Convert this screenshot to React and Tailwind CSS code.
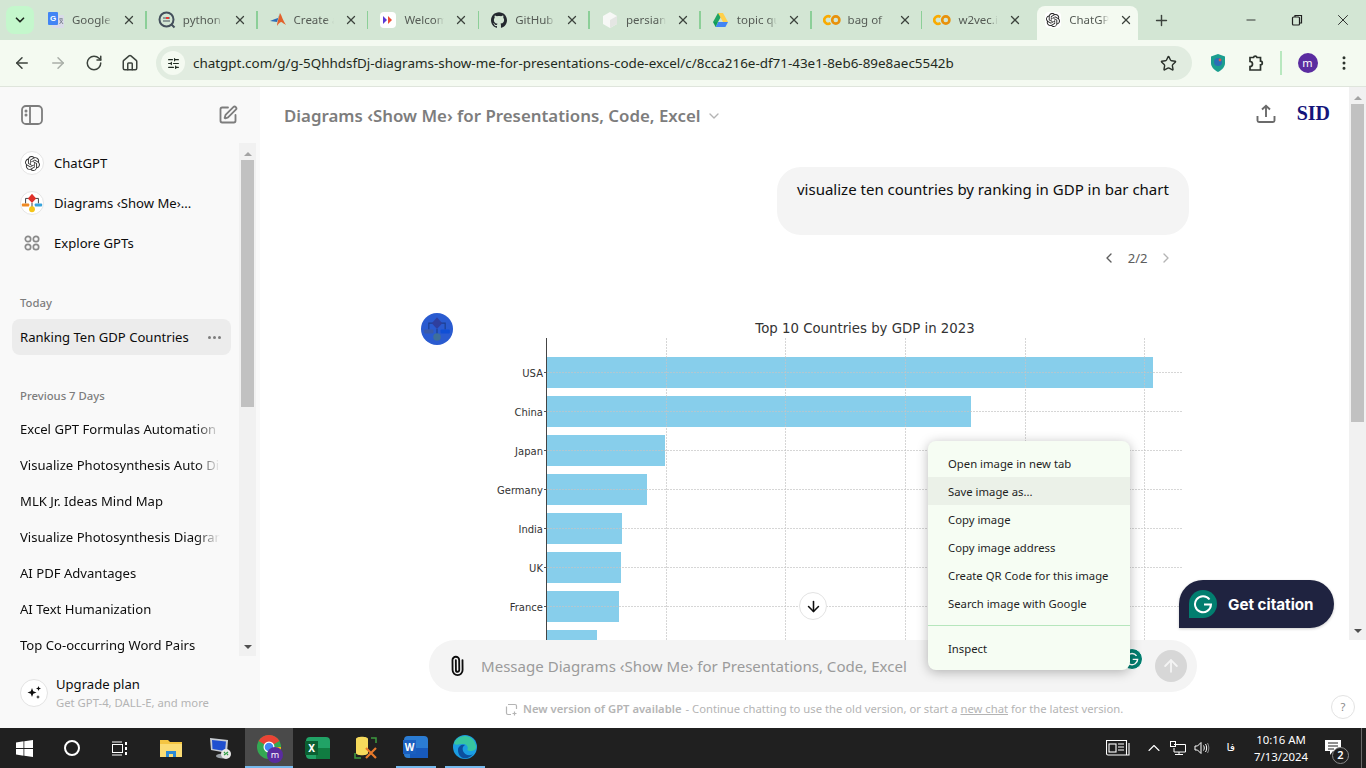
import {
  ArrowDown, ArrowLeft, ArrowRight, ArrowUp, ChevronDown, ChevronLeft, ChevronRight, ChevronUp,
  EllipsisVertical, House, Minus, Paperclip, Plus, RotateCw, SlidersHorizontal, SquarePen, Star, X,
} from 'lucide-react';
import { SiGithub, SiOpenai } from 'react-icons/si';

const GoogleTranslate = () => (
  <svg width="18" height="18" viewBox="0 0 18 18">
    <rect x="5" y="4" width="12" height="13" rx="1" fill="#d9dbe8" />
    <rect x="1" y="1" width="10" height="13" rx="1" fill="#4285f4" />
    <text x="3" y="10" fontSize="8" fontWeight="700" fill="#fff" fontFamily="Liberation Sans">G</text>
    <path d="M12 8h4M14 7v1M12.500 13l3-4M13 9l3 4" stroke="#6b7280" strokeWidth="0.8" fill="none" />
  </svg>
);
const PythonIcon = () => (
  <svg width="18" height="18" viewBox="0 0 18 18">
    <circle cx="8.500" cy="8.500" r="7" fill="none" stroke="#44505c" strokeWidth="2" />
    <path d="M13 13l3.500 3.500" stroke="#44505c" strokeWidth="2" />
    <path d="M5 7h7M5 10h7" stroke="#44505c" strokeWidth="1.200" />
    <rect x="8" y="6" width="3" height="2" fill="#e53935" />
  </svg>
);
const MatlabIcon = () => (
  <svg width="18" height="18" viewBox="0 0 18 18">
    <path d="M1 10l5-2 3-1 2-5-3 9z" fill="#2f6db5" />
    <path d="M11 2c2 3 3 8 6 12-2-1-4-3-5-3-2 1-3 2-4 4 0-3 2-9 3-13z" fill="#e2612b" />
  </svg>
);
const WelcomeIcon = () => (
  <div className="w-4 h-4 rounded-sm bg-white flex items-center justify-center">
    <svg width="10" height="10" viewBox="0 0 10 10">
      <path d="M0 1l4 4-4 4z" fill="#5b3bd6" />
      <path d="M5 1l4 4-4 4z" fill="#ee4e34" />
    </svg>
  </div>
);
const CubeIcon = () => (
  <svg width="18" height="18" viewBox="0 0 18 18">
    <path d="M9 1l7 4v8l-7 4-7-4V5z" fill="#f7f8f6" />
    <path d="M9 9l7-4v8l-7 4z" fill="#e4e6e3" />
  </svg>
);
const DriveIcon = () => (
  <svg width="17" height="16" viewBox="0 0 17 16">
    <path d="M6 1h5l-5 9H1z" fill="#1fa463" />
    <path d="M6 1h5l5 9h-5z" fill="#ffd04b" />
    <path d="M3.600 15l2.600-5H16l-2.600 5z" fill="#4285f4" />
    <path d="M1 10h5l-2.400 5z" fill="#0f9d58" />
  </svg>
);
const ColabIcon = () => (
  <svg width="18" height="12" viewBox="0 0 18 12" fill="none" strokeWidth="2.600">
    <path d="M7.500 3A3.800 3.800 0 1 0 7.500 9" stroke="#f9ab00" />
    <circle cx="12.800" cy="6" r="3.600" stroke="#e8910a" />
  </svg>
);
const ChatGptTabIcon = () => (
  <div className="w-4 h-4 rounded-sm bg-white flex items-center justify-center text-[#222]">
    <SiOpenai size={14} />
  </div>
);

const TABS = [
  { title: 'Google', icon: <GoogleTranslate />, sep: true },
  { title: 'python', icon: <PythonIcon />, sep: true },
  { title: 'Create a', icon: <MatlabIcon />, sep: true },
  { title: 'Welcom', icon: <WelcomeIcon />, sep: true },
  { title: 'GitHub', icon: <SiGithub size={16} className="text-[#24292f]" />, sep: true },
  { title: 'persian', icon: <CubeIcon />, sep: true },
  { title: 'topic qu', icon: <DriveIcon />, sep: true },
  { title: 'bag of', icon: <ColabIcon />, sep: true },
  { title: 'w2vec.i', icon: <ColabIcon />, sep: false },
  { title: 'ChatGP', icon: <ChatGptTabIcon />, sep: false, active: true },
];

function Tab({ tab }) {
  return (
    <div className="w-[110.8px] h-[34px] shrink-0 flex items-center">
      <div className={`flex-1 min-w-0 h-full flex items-center pl-[3px] pb-[6px] mx-1 ${tab.active ? 'bg-[#f4faf1] rounded-t-lg' : ''}`}>
        <div className="w-[18px] h-[18px] ml-[4px] shrink-0 flex items-center justify-center">{tab.icon}</div>
        <span className="ml-[7px] w-[40px] overflow-hidden whitespace-nowrap text-[11.5px] text-[#555b55] [mask-image:linear-gradient(to_right,black_78%,transparent)]">
          {tab.title}
        </span>
        <X size={14} strokeWidth={2.2} className="ml-[10px] shrink-0 text-[#3c433d]" />
      </div>
      <div className={`w-[1.5px] h-[18px] mb-[6px] shrink-0 ${tab.sep ? 'bg-[#8ccf98]' : ''}`} />
    </div>
  );
}

function TabStrip() {
  return (
    <div className="h-10 shrink-0 bg-[#d3e6d4] flex">
      <div className="w-[28px] h-[28px] ml-[6px] mt-[6px] rounded-lg bg-[#c4f7cc] flex items-center justify-center">
        <ChevronDown size={14} strokeWidth={3} className="text-[#1f2a20]" />
      </div>
      <div className="flex mt-[6px] ml-[2px] w-[1108px]">
        {TABS.map((t) => <Tab key={t.title} tab={t} />)}
      </div>
      <div className="w-[34px] h-[28px] mt-[6px] flex items-center justify-center text-[#3c433d]">
        <Plus size={17} strokeWidth={2} />
      </div>
      <div className="ml-auto flex h-10 text-[#1f1f1f]">
        <div className="w-[46px] flex items-center justify-center"><Minus size={14} strokeWidth={1.5} /></div>
        <div className="w-[46px] flex items-center justify-center">
          <svg width="12" height="12" viewBox="0 0 12 12" fill="none" stroke="currentColor" strokeWidth="1.200">
            <rect x="1.500" y="3" width="7" height="8" rx="1" />
            <path d="M4 3V1.500h6.500V9H8.500" />
          </svg>
        </div>
        <div className="w-[46px] flex items-center justify-center"><X size={18} strokeWidth={1.2} /></div>
      </div>
    </div>
  );
}

function Toolbar() {
  return (
    <div className="h-[47px] shrink-0 bg-[#f4faf1] border-b border-[#dfe5dc] flex items-center">
      <div className="w-[156px] shrink-0 flex items-center pl-[13px] gap-[18px] text-[#3c433d]">
        <ArrowLeft size={18} strokeWidth={2} />
        <ArrowRight size={18} strokeWidth={2} className="text-[#a9afa8]" />
        <RotateCw size={18} strokeWidth={2} />
        <House size={18} strokeWidth={2} />
      </div>
      <div className="w-[1036px] h-[34px] rounded-full bg-[#e1ece0] flex items-center pl-[5px]">
        <div className="w-6 h-6 rounded-full bg-[#f4faf1] flex items-center justify-center text-[#1f2a20]">
          <SlidersHorizontal size={13} strokeWidth={2.2} />
        </div>
        <span className="ml-[8px] text-[13.43px] text-[#1f2a20] whitespace-nowrap">
          chatgpt.com/g/g-5QhhdsfDj-diagrams-show-me-for-presentations-code-excel/c/8cca216e-df71-43e1-8eb6-89e8aec5542b
        </span>
        <Star size={17} strokeWidth={2} className="ml-auto mr-[15px] text-[#2b322c]" />
      </div>
      <div className="flex items-center flex-1">
        <svg width="16" height="18" viewBox="0 0 16 18" className="ml-[18px]">
          <path d="M8 0l7 2.500V9c0 4-3 7-7 9-4-2-7-5-7-9V2.500z" fill="#1b9e8f" />
          <circle cx="8" cy="8" r="4" fill="#2a6fb5" />
          <circle cx="10" cy="6" r="1.400" fill="#e0564a" />
        </svg>
        <svg width="18" height="18" viewBox="0 0 18 18" fill="none" stroke="#2b322c" strokeWidth="1.700" className="ml-[20px]">
          <path d="M4 3.500h3.500a1.800 1.800 0 0 1 3.500 0H14.500v3.700a1.800 1.800 0 0 1 0 3.600v5.200H4v-3.500a1.800 1.800 0 0 0 0-5z" />
        </svg>
        <div className="w-[1.5px] h-6 bg-[#b8e8bf] ml-[16px]" />
        <div className="w-5 h-5 rounded-full bg-[#5a2ca0] text-white text-[11px] flex items-center justify-center ml-[16px]">m</div>
        <EllipsisVertical size={18} strokeWidth={2} className="ml-[17px] text-[#2b322c]" />
      </div>
    </div>
  );
}

const ExploreIcon = () => (
  <svg width="18" height="18" viewBox="0 0 18 18" fill="none" stroke="#8a8a8a" strokeWidth="1.700">
    <circle cx="5" cy="5" r="2.700" />
    <circle cx="13" cy="5" r="2.700" />
    <circle cx="5" cy="13" r="2.700" />
    <circle cx="13" cy="13" r="2.700" />
  </svg>
);

function FlowIcon({ size = 24, colors }) {
  const c = colors || { d: '#e0312a', l: '#f08a24', r: '#37a3dc', o: '#f5c518', s: '#333' };
  return (
    <svg width={size} height={size} viewBox="0 0 24 24">
      <path d="M5 12.500V7h14v5.500M12 12v5" stroke={c.s} strokeWidth="1" fill="none" />
      <path d="M12 2l4.500 5-4.500 5-4.500-5z" fill={c.d} />
      <rect x="1" y="12.500" width="8" height="3.400" rx="0.800" fill={c.l} />
      <rect x="15" y="12.500" width="8" height="3.400" rx="0.800" fill={c.r} />
      <circle cx="12" cy="18.800" r="3.200" fill={c.o} />
    </svg>
  );
}

const HISTORY = [
  'Excel GPT Formulas Automation',
  'Visualize Photosynthesis Auto Diagram',
  'MLK Jr. Ideas Mind Map',
  'Visualize Photosynthesis Diagram',
  'AI PDF Advantages',
  'AI Text Humanization',
  'Top Co-occurring Word Pairs',
];

function Scrollbar({ thumbClass }) {
  return (
    <div className="w-[17px] shrink-0 bg-[#f1f1f1] flex flex-col items-center">
      <div className="h-[17px] shrink-0 flex items-end justify-center pb-[4px]">
        <div className="w-0 h-0 border-x-[4px] border-x-transparent border-b-[4px] border-b-[#a3a3a3]" />
      </div>
      <div className={`w-[13px] bg-[#c1c1c1] ${thumbClass}`} />
      <div className="mt-auto h-[17px] shrink-0 flex items-start justify-center pt-[6px]">
        <div className="w-0 h-0 border-x-[4px] border-x-transparent border-t-[4px] border-t-[#505050]" />
      </div>
    </div>
  );
}

function Sidebar() {
  return (
    <aside className="w-[260px] shrink-0 bg-[#f9f9f9] flex flex-col">
      <div className="h-[56px] shrink-0 flex items-center justify-between pl-[21px] pr-[22px] text-[#7d7d7d]">
        <svg width="22" height="20" viewBox="0 0 22 20" fill="none" stroke="currentColor" strokeWidth="1.800">
          <rect x="1" y="1" width="20" height="18" rx="4" />
          <path d="M9 1v18" />
          <circle cx="5" cy="6" r="0.600" fill="currentColor" />
          <circle cx="5" cy="10" r="0.600" fill="currentColor" />
        </svg>
        <SquarePen size={20} strokeWidth={2.2} />
      </div>
      <div className="h-[513px] shrink-0 flex pr-[4px]">
        <div className="flex-1 min-w-0 overflow-hidden">
          <div className="h-10 flex items-center pl-[20px] gap-[10px] text-[13.1px] text-[#0d0d0d]">
            <div className="w-6 h-6 rounded-full bg-white border border-[#e5e5e5] flex items-center justify-center text-[#333]"><SiOpenai size={15} /></div>
            <span className="pt-[2px]">ChatGPT</span>
          </div>
          <div className="h-10 flex items-center pl-[20px] gap-[10px] text-[13.1px] text-[#0d0d0d]">
            <div className="w-6 h-6 rounded-full bg-white border border-[#e5e5e5] flex items-center justify-center overflow-hidden"><FlowIcon size={22} /></div>
            <span className="pt-[2px]">Diagrams ‹Show Me›...</span>
          </div>
          <div className="h-10 flex items-center pl-[23px] gap-[13px] text-[13.1px] text-[#0d0d0d]">
            <ExploreIcon />
            <span className="pt-[2px]">Explore GPTs</span>
          </div>
          <div className="mt-[30px] h-5 pl-[20px] text-[11.3px] font-medium text-[#7d7d7d] leading-[20px]">Today</div>
          <div className="mt-[6px] ml-[12px] mr-[8px] h-9 rounded-lg bg-[#ececec] flex items-center pl-2 pr-[10px] text-[13.1px] text-[#0d0d0d]">
            <span className="whitespace-nowrap pt-[2px]">Ranking Ten GDP Countries</span>
            <span className="ml-auto flex gap-[2px]">
              <i className="w-[3px] h-[3px] rounded-full bg-[#7d7d7d]" />
              <i className="w-[3px] h-[3px] rounded-full bg-[#7d7d7d]" />
              <i className="w-[3px] h-[3px] rounded-full bg-[#7d7d7d]" />
            </span>
          </div>
          <div className="mt-[31px] h-5 pl-[20px] text-[11.3px] font-medium text-[#7d7d7d] leading-5">Previous 7 Days</div>
          <div className="mt-[5px]">
            {HISTORY.map((h) => (
              <div key={h} className="h-9 flex items-center pl-[20px] text-[13.1px] text-[#0d0d0d]">
                <span className="w-[200px] pt-[2px] overflow-hidden whitespace-nowrap [mask-image:linear-gradient(to_right,black_88%,transparent)]">{h}</span>
              </div>
            ))}
          </div>
        </div>
        <Scrollbar thumbClass="h-[247px]" />
      </div>
      <div className="flex-1 flex items-center pl-[20px] gap-2 pt-[1px]">
        <div className="w-7 h-7 rounded-full border border-[#e3e3e3] bg-white flex items-center justify-center">
          <svg width="16" height="16" viewBox="0 0 16 16" fill="#0d0d0d">
            <path d="M6 3l1.200 3.300L10.500 7.500 7.200 8.700 6 12 4.800 8.700 1.500 7.500l3.300-1.200zM12.500 1l.7 1.800 1.800.7-1.800.7-.7 1.800-.7-1.800-1.800-.7 1.800-.7zM12 10l.6 1.400 1.400.6-1.400.6-.6 1.400-.6-1.400-1.400-.6 1.400-.6z" />
          </svg>
        </div>
        <div className="flex flex-col">
          <span className="text-[13.1px] leading-[19px] pt-[1px] text-[#0d0d0d]">Upgrade plan</span>
          <span className="text-[11.3px] leading-[18px] text-[#b4b4b4]">Get GPT-4, DALL-E, and more</span>
        </div>
      </div>
    </aside>
  );
}

const BARS = [
  { name: 'USA', y: 357, x2: 1153 },
  { name: 'China', y: 396, x2: 971 },
  { name: 'Japan', y: 435, x2: 665 },
  { name: 'Germany', y: 474, x2: 647 },
  { name: 'India', y: 513, x2: 622 },
  { name: 'UK', y: 552, x2: 621 },
  { name: 'France', y: 591, x2: 619 },
  { name: '', y: 630, x2: 597 },
];
const GRID_X = [666, 785, 905, 1025, 1144];

function Chart() {
  return (
    <svg width="700" height="330" viewBox="490 310 700 330" className="block shrink-0">
      <text x="865" y="333" textAnchor="middle" fontSize="13.3" fill="#333" fontFamily="DejaVu Sans">Top 10 Countries by GDP in 2023</text>
      {BARS.map((b) => (
        <rect key={b.y} x="547" y={b.y} width={b.x2 - 547} height="31" fill="#87ceeb" />
      ))}
      {GRID_X.map((x) => (
        <line key={x} x1={x + 0.5} x2={x + 0.5} y1="338" y2="640" stroke="#c4c4c4" strokeOpacity="0.7" strokeDasharray="2 1" />
      ))}
      {BARS.filter((b) => b.name).map((b) => (
        <g key={b.name}>
          <line x1="547" x2="1183" y1={b.y + 15.5} y2={b.y + 15.5} stroke="#c4c4c4" strokeOpacity="0.7" strokeDasharray="2 1" />
          <line x1="544" x2="547" y1={b.y + 15.5} y2={b.y + 15.5} stroke="#555" />
          <text x="543" y={b.y + 19.5} textAnchor="end" fontSize="10" fill="#333" fontFamily="DejaVu Sans">{b.name}</text>
        </g>
      ))}
      <line x1="546.5" x2="546.5" y1="338" y2="640" stroke="#444" />
    </svg>
  );
}

function ChatColumn() {
  return (
    <div className="flex-1 min-w-0 flex flex-col overflow-hidden bg-white">
      <div className="h-[58px] shrink-0 flex items-center pl-[24px] pr-[19px]">
        <span className="text-[16.85px] font-semibold text-[#7d7d7d]">Diagrams ‹Show Me› for Presentations, Code, Excel</span>
        <ChevronDown size={16} strokeWidth={2} className="ml-[5px] text-[#b4b4b4]" />
        <svg width="20" height="20" viewBox="0 0 20 20" fill="none" stroke="#6b6b6b" strokeWidth="1.900" className="ml-auto -mt-[5px]">
          <path d="M10 13V2M6 5.500L10 1.800l4 3.700M1.500 12v4.500a1.500 1.500 0 0 0 1.500 1.500h14a1.500 1.500 0 0 0 1.500-1.500V12" />
        </svg>
        <span className="ml-[21px] -mt-[6px] font-['Liberation_Serif',serif] font-bold text-[20px] text-[#14147a]">SID</span>
      </div>
      <div className="mt-[22px] pr-[160px] flex justify-end">
        <div className="w-[412px] h-[68px] rounded-3xl bg-[#f4f4f4] px-5 pt-[9px] text-[15px] leading-[26px] text-[#0d0d0d] whitespace-nowrap">
          visualize ten countries by ranking in GDP in bar chart
        </div>
      </div>
      <div className="h-[46px] shrink-0 pr-[175px] flex items-center justify-end text-[13.1px] text-[#5d5d5d]">
        <ChevronLeft size={16} strokeWidth={2} />
        <span className="mx-[10.5px] pt-[2px]">2/2</span>
        <ChevronRight size={16} strokeWidth={2} className="text-[#b4b4b4]" />
      </div>
      <div className="flex pl-[161px] mt-[29px]">
        <div className="w-8 h-8 mt-[3px] rounded-full bg-[#2a5bd0] overflow-hidden flex items-center justify-center shrink-0">
          <FlowIcon size={28} colors={{ d: '#2f3f9e', l: '#3a5aa8', r: '#0f4fd6', o: '#3f6f9a', s: '#1d3f8f' }} />
        </div>
        <div className="ml-[37px]"><Chart /></div>
      </div>
    </div>
  );
}

function GrammarlyMark({ size }) {
  return (
    <svg width={size} height={size} viewBox="0 0 20 20" fill="none" stroke="#fff" strokeWidth="2">
      <path d="M16.500 5.500A8 8 0 1 0 18 10.500H11" />
    </svg>
  );
}

function Composer() {
  return (
    <div className="flex-1 flex flex-col bg-white">
      <div className="ml-[169px] w-[768px] h-[52px] shrink-0 rounded-full bg-[#f4f4f4] flex items-center relative">
        <Paperclip size={20} strokeWidth={2.2} className="ml-[18px] text-[#0d0d0d] -rotate-[45deg]" />
        <span className="ml-[14px] text-[15.05px] text-[#9b9b9b] whitespace-nowrap">Message Diagrams ‹Show Me› for Presentations, Code, Excel</span>
        <div className="absolute right-[54px] top-[8px] w-[22px] h-[22px] rounded-full bg-[#027e6f] border border-white flex items-center justify-center">
          <GrammarlyMark size={14} />
        </div>
        <div className="ml-auto mr-[10px] w-8 h-8 rounded-full bg-[#d7d7d7] flex items-center justify-center">
          <ArrowUp size={20} strokeWidth={2.2} className="text-[#f4f4f4]" />
        </div>
      </div>
      <div className="flex-1 flex items-center text-[11.25px] text-[#b4b4b4] pl-[245px] pr-[11px] pb-[2px]">
        <svg width="13" height="13" viewBox="0 0 13 13" fill="none" stroke="#b4b4b4" strokeWidth="1.200">
          <path d="M3 1.500h7a1.500 1.500 0 0 1 1.500 1.500v3M6 11.500H3A1.500 1.500 0 0 1 1.500 10V3.500M9.500 8.500v4M7.500 10.500h4" />
        </svg>
        <span className="ml-[5px] font-semibold">New version of GPT available</span>
        <span className="ml-[4px]">- Continue chatting to use the old version, or start a <u>new chat</u> for the latest version.</span>
        <div className="ml-auto w-6 h-6 -mt-1 rounded-full border border-[#e3e3e3] flex items-center justify-center text-[#8a8a8a]">?</div>
      </div>
    </div>
  );
}

const MENU = ['Open image in new tab', 'Save image as...', 'Copy image', 'Copy image address', 'Create QR Code for this image', 'Search image with Google'];

function ContextMenu() {
  return (
    <div className="absolute left-[928px] top-[441px] w-[202px] h-[229px] rounded-lg bg-[#f6fdf3] shadow-[0_2px_12px_rgba(0,0,0,0.28)] pt-[8px] text-[11.3px] text-[#1f1f1f] z-10">
      {MENU.map((m) => (
        <div key={m} className={`h-7 flex items-center pl-5 pt-[2px] ${m.startsWith('Save') ? 'bg-[#ebf1e8]' : ''}`}>{m}</div>
      ))}
      <div className="h-px mt-[8px] bg-[#b6e6bc]" />
      <div className="h-7 mt-[9px] flex items-center pl-5">Inspect</div>
    </div>
  );
}

function CitationButton() {
  return (
    <div className="absolute left-[1179px] top-[580px] w-[155px] h-12 rounded-[24px] rounded-bl-none bg-[#1f2340] flex items-center pl-[10px] z-10 shadow-[0_1px_3px_rgba(0,0,0,0.2)]">
      <div className="w-7 h-7 rounded-full rounded-bl-none bg-[#027e6f] flex items-center justify-center">
        <GrammarlyMark size={20} />
      </div>
      <span className="ml-[11px] pt-[2px] font-['Inter',sans-serif] font-bold text-[15.2px] text-white">Get citation</span>
    </div>
  );
}

const WindowsLogo = () => (
  <svg width="17" height="17" viewBox="0 0 17 17" fill="#fff">
    <path d="M0 2.400 7.500 1.300V8H0zM8.300 1.200 17 0v8H8.300zM0 9h7.500v6.700L0 14.600zM8.300 9H17v8l-8.700-1.200z" />
  </svg>
);
const ChromeLogo = () => (
  <div className="relative w-6 h-6">
    <svg width="24" height="24" viewBox="0 0 24 24">
      <circle cx="12" cy="12" r="12" fill="#34a853" />
      <path d="M12 12 1.600 6A12 12 0 0 1 22.400 6z" fill="#ea4335" />
      <path d="M12 12h12a12 12 0 0 1-12 12z" fill="#fbbc04" />
      <circle cx="12" cy="12" r="5.500" fill="#fff" />
      <circle cx="12" cy="12" r="4.300" fill="#4285f4" />
    </svg>
    <div className="absolute -right-[2px] -bottom-[4px] w-4 h-4 rounded-full bg-[#5a2ca0] text-white text-[9px] flex items-center justify-center">m</div>
  </div>
);
const ExcelLogo = () => (
  <div className="relative w-6 h-[22px] bg-[#21a366] rounded-sm">
    <div className="absolute right-0 top-[11px] w-[14px] h-[11px] bg-[#107c41]" />
    <div className="absolute -left-[1px] top-[4px] w-[13px] h-[14px] bg-[#0b5f32] text-white text-[10px] font-bold flex items-center justify-center">X</div>
  </div>
);
const WordLogo = () => (
  <div className="relative w-6 h-[22px] bg-[#2b7cd3] rounded-sm">
    <div className="absolute right-0 bottom-0 w-[18px] h-[10px] bg-[#185abd]" />
    <div className="absolute -left-[1px] top-[4px] w-[13px] h-[14px] bg-[#1a5fc0] text-white text-[10px] font-bold flex items-center justify-center">W</div>
  </div>
);
const FolderLogo = () => (
  <svg width="22" height="20" viewBox="0 0 22 20">
    <path d="M0 2h8l2 2h12v15H0z" fill="#f4c542" />
    <path d="M0 6h22v13H0z" fill="#fbdc74" />
    <path d="M6 19v-6h10v6h-3v-3H9v3z" fill="#2d8ad6" />
  </svg>
);
const RemoteLogo = () => (
  <svg width="24" height="24" viewBox="0 0 24 24">
    <path d="M1 2l18 2-1 13L2 14z" fill="#c8ccd2" />
    <path d="M3 4l14 1.500-1 9.500L3.500 13z" fill="#1f4fd0" />
    <ellipse cx="14" cy="20" rx="7" ry="2.500" fill="#9aa0a6" />
    <circle cx="17" cy="18" r="5" fill="#e8e8e8" />
    <path d="M15 19l4-3M15 16l1 1M18 19l1-1" stroke="#2f9e44" strokeWidth="1.300" />
  </svg>
);
const ToolsLogo = () => (
  <svg width="24" height="24" viewBox="0 0 24 24" fill="none">
    <path d="M2 3c0-3 12-3 12 0v14c0 3-12 3-12 0z" fill="#f6da5c" />
    <path d="M17 2h5v5M7 22H1v-5" stroke="#3d9a3f" strokeWidth="1.500" />
    <path d="M12 12l10 10M22 12L12 22" stroke="#e8792b" strokeWidth="2.200" />
  </svg>
);
const EdgeLogo = () => (
  <svg width="24" height="24" viewBox="0 0 24 24">
    <circle cx="12" cy="12" r="12" fill="#1b9de2" />
    <path d="M1 8a11.500 11.500 0 0 1 22 3c1 3-2 5-6 5-2 0-3-1-2.500-2 1-2-1-5-4-5-4 0-9 2-9.500-1z" fill="#37c6a0" />
    <path d="M5 15c0-4 4-6 7-5-2 1-3 3-2 6s6 6 10 3c-3 4-7 5-10 4s-5-4-5-8z" fill="#0c4f9e" />
  </svg>
);

function Taskbar() {
  return (
    <div className="h-10 shrink-0 bg-[#202020] flex items-center text-white">
      <div className="w-12 h-10 flex items-center justify-center"><WindowsLogo /></div>
      <div className="w-12 h-10 flex items-center justify-center">
        <div className="w-4 h-4 rounded-full border-[2.5px] border-white" />
      </div>
      <div className="w-12 h-10 flex items-center justify-center">
        <svg width="16" height="15" viewBox="0 0 16 15" fill="none" stroke="#fff" strokeWidth="1">
          <path d="M0 1h10M0 14h10" />
          <rect x="0.500" y="3.500" width="10" height="8" />
          <path d="M14 1v3M14 6v3M14 11v3" strokeWidth="2" />
        </svg>
      </div>
      <div className="w-[53px] h-10 flex items-center justify-center"><FolderLogo /></div>
      <div className="w-12 h-10 flex items-center justify-center"><RemoteLogo /></div>
      <div className="w-12 h-10 bg-[#4a4a4a] border-b-2 border-[#76b9ed] flex items-center justify-center"><ChromeLogo /></div>
      <div className="w-[50px] h-10 flex items-center justify-center"><ExcelLogo /></div>
      <div className="w-[46px] h-10 flex items-center justify-center"><ToolsLogo /></div>
      <div className="w-[54px] h-10 flex items-center justify-center"><div className="w-10 h-10 border-b-2 border-[#76b9ed] flex items-center justify-center"><WordLogo /></div></div>
      <div className="w-[44px] h-10 flex items-center justify-center"><div className="w-10 h-10 border-b-2 border-[#76b9ed] flex items-center justify-center"><EdgeLogo /></div></div>
      <div className="ml-auto flex items-center h-10">
        <svg width="24" height="16" viewBox="0 0 24 16" fill="none" stroke="#fff" strokeWidth="1.100">
          <path d="M.5.5h20V15H2a1.500 1.500 0 0 1-1.500-1.500zM23 3v12h-2" />
          <rect x="3" y="4" width="7" height="8" />
          <path d="M12 4h6M12 7h6M12 10h6" />
        </svg>
        <ChevronUp size={20} strokeWidth={1.3} className="ml-[14px]" />
        <svg width="16" height="14" viewBox="0 0 16 14" fill="none" stroke="#fff" strokeWidth="1" className="ml-[6px]">
          <rect x="0.500" y="0.500" width="5" height="5" />
          <path d="M4 3.500h11.500V11H4V7M9 11v2.500M5 13.500h8" />
        </svg>
        <svg width="16" height="14" viewBox="0 0 16 14" fill="none" stroke="#fff" strokeWidth="1" className="ml-[8px]">
          <path d="M1 5v4h2.500L7 12.500v-11L3.500 5zM9.500 4.500c1 1.500 1 3.500 0 5M11.500 3c1.500 2 1.500 6 0 8" />
          <path d="M13.500 2c1.800 3 1.800 7 0 10" opacity="0.5" />
        </svg>
        <span className="ml-[16px] text-[11px] font-['DejaVu_Sans',sans-serif]">فا</span>
        <div className="w-[70px] ml-[11px] text-center text-[11.4px] leading-[17px]">
          <div>10:16 AM</div>
          <div>7/13/2024</div>
        </div>
        <div className="relative w-[34px] h-10 flex items-center justify-center">
          <svg width="17" height="16" viewBox="0 0 17 16" fill="#fff">
            <path d="M0 0h16v11H8l-3 4v-4H0z" />
            <path d="M3 3h10M3 6h10M3 9h6" stroke="#202020" strokeWidth="1" />
          </svg>
          <div className="absolute right-[1px] bottom-[4px] w-[17px] h-[17px] rounded-full bg-[#202020] border border-[#8a8a8a] text-[11px] font-semibold flex items-center justify-center">2</div>
        </div>
        <div className="w-px h-10 bg-[#6a6a6a] ml-[11px] mr-[4px]" />
      </div>
    </div>
  );
}

export default function App() {
  return (
    <div className="relative w-[1366px] h-[768px] overflow-hidden flex flex-col font-['Noto_Sans',sans-serif]">
      <TabStrip />
      <Toolbar />
      <div className="flex-1 min-h-0 flex">
        <Sidebar />
        <main className="flex-1 min-w-0 flex flex-col bg-white">
          <div className="h-[553px] shrink-0 flex">
            <ChatColumn />
            <Scrollbar thumbClass="h-[318px]" />
          </div>
          <Composer />
        </main>
      </div>
      <Taskbar />
      <div className="absolute left-[799px] top-[592px] w-7 h-7 rounded-full bg-white border border-[#e3e3e3] flex items-center justify-center z-[5]">
        <ArrowDown size={17} strokeWidth={2.2} className="text-[#0d0d0d]" />
      </div>
      <ContextMenu />
      <CitationButton />
    </div>
  );
}
